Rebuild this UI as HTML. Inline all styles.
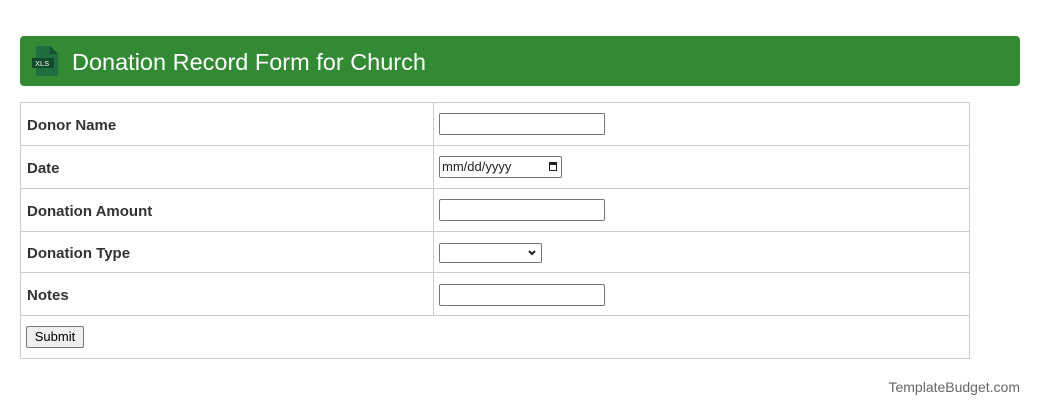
<!DOCTYPE html>
<html><head><meta charset="utf-8"><style>
body{margin:0;width:1040px;height:416px;background:#fff;font-family:"Liberation Sans",Arial,sans-serif;position:relative;overflow:hidden}
.bar{position:absolute;left:20px;top:36px;width:1000px;height:50px;background:#338a35;border-radius:4px}
.bar h1{position:absolute;left:52px;top:12px;margin:0;font-weight:normal;font-size:23.5px;color:#fff;line-height:28px}
.tbl{position:absolute;left:20px;top:102px;width:948px;height:255px;border:1px solid #ccc}
.hl{position:absolute;left:0;width:948px;height:1px;background:#ccc}
.vl{position:absolute;left:412px;top:0;width:1px;height:213px;background:#ccc}
.lb{position:absolute;left:6px;font-weight:bold;font-size:15px;color:#333}
.in{position:absolute;box-sizing:border-box;border:1px solid #767676;border-radius:2px;background:#fff}
.btn{position:absolute;left:5px;top:223px;width:58px;height:22px;box-sizing:border-box;border:1px solid #767676;border-radius:2px;background:#efefef;font-size:13px;text-align:center;line-height:20px;color:#000}
.foot{position:absolute;right:20px;top:379px;font-size:14px;color:#666}
</style></head><body>
<div class="bar">
<svg style="position:absolute;left:12px;top:9px" width="28" height="32" viewBox="0 0 28 32">
<path d="M5 1h13l8 8v21a1 1 0 0 1-1 1H5a1 1 0 0 1-1-1V2a1 1 0 0 1 1-1z" fill="#1e6e3f"/>
<path d="M18 1v8h8z" fill="#15532f"/>
<rect x="0" y="13" width="22" height="10" fill="#0f4a2a"/>
<text x="3" y="21" font-size="7.5" fill="#fff" font-family="Liberation Sans">XLS</text>
</svg>
<h1>Donation Record Form for Church</h1></div>
<div class="tbl">
<div class="vl"></div>
<div class="hl" style="top:42px"></div><div class="hl" style="top:85px"></div><div class="hl" style="top:128px"></div><div class="hl" style="top:169px"></div><div class="hl" style="top:212px"></div>
<div class="lb" style="top:14px">Donor Name</div>
<div class="lb" style="top:57px">Date</div>
<div class="lb" style="top:100px">Donation Amount</div>
<div class="lb" style="top:142px">Donation Type</div>
<div class="lb" style="top:184px">Notes</div>
<div class="in" style="left:418px;top:10px;width:166px;height:22px"></div>
<div class="in" style="left:418px;top:53px;width:123px;height:22px;font-size:13px;line-height:20px;padding-left:2px;color:#222">mm/dd/yyyy<span style="position:absolute;right:4px;top:5px;width:8px;height:9px;border:1.5px solid #222;border-top-width:3px;box-sizing:border-box"></span></div>
<div class="in" style="left:418px;top:96px;width:166px;height:22px"></div>
<div class="in" style="left:418px;top:140px;width:103px;height:20px"><svg style="position:absolute;right:5px;top:6px" width="8" height="6" viewBox="0 0 8 6"><path d="M1 1l3 3 3-3" fill="none" stroke="#222" stroke-width="2"/></svg></div>
<div class="in" style="left:418px;top:181px;width:166px;height:22px"></div>
<div class="btn">Submit</div>
</div>
<div class="foot">TemplateBudget.com</div>
</body></html>
